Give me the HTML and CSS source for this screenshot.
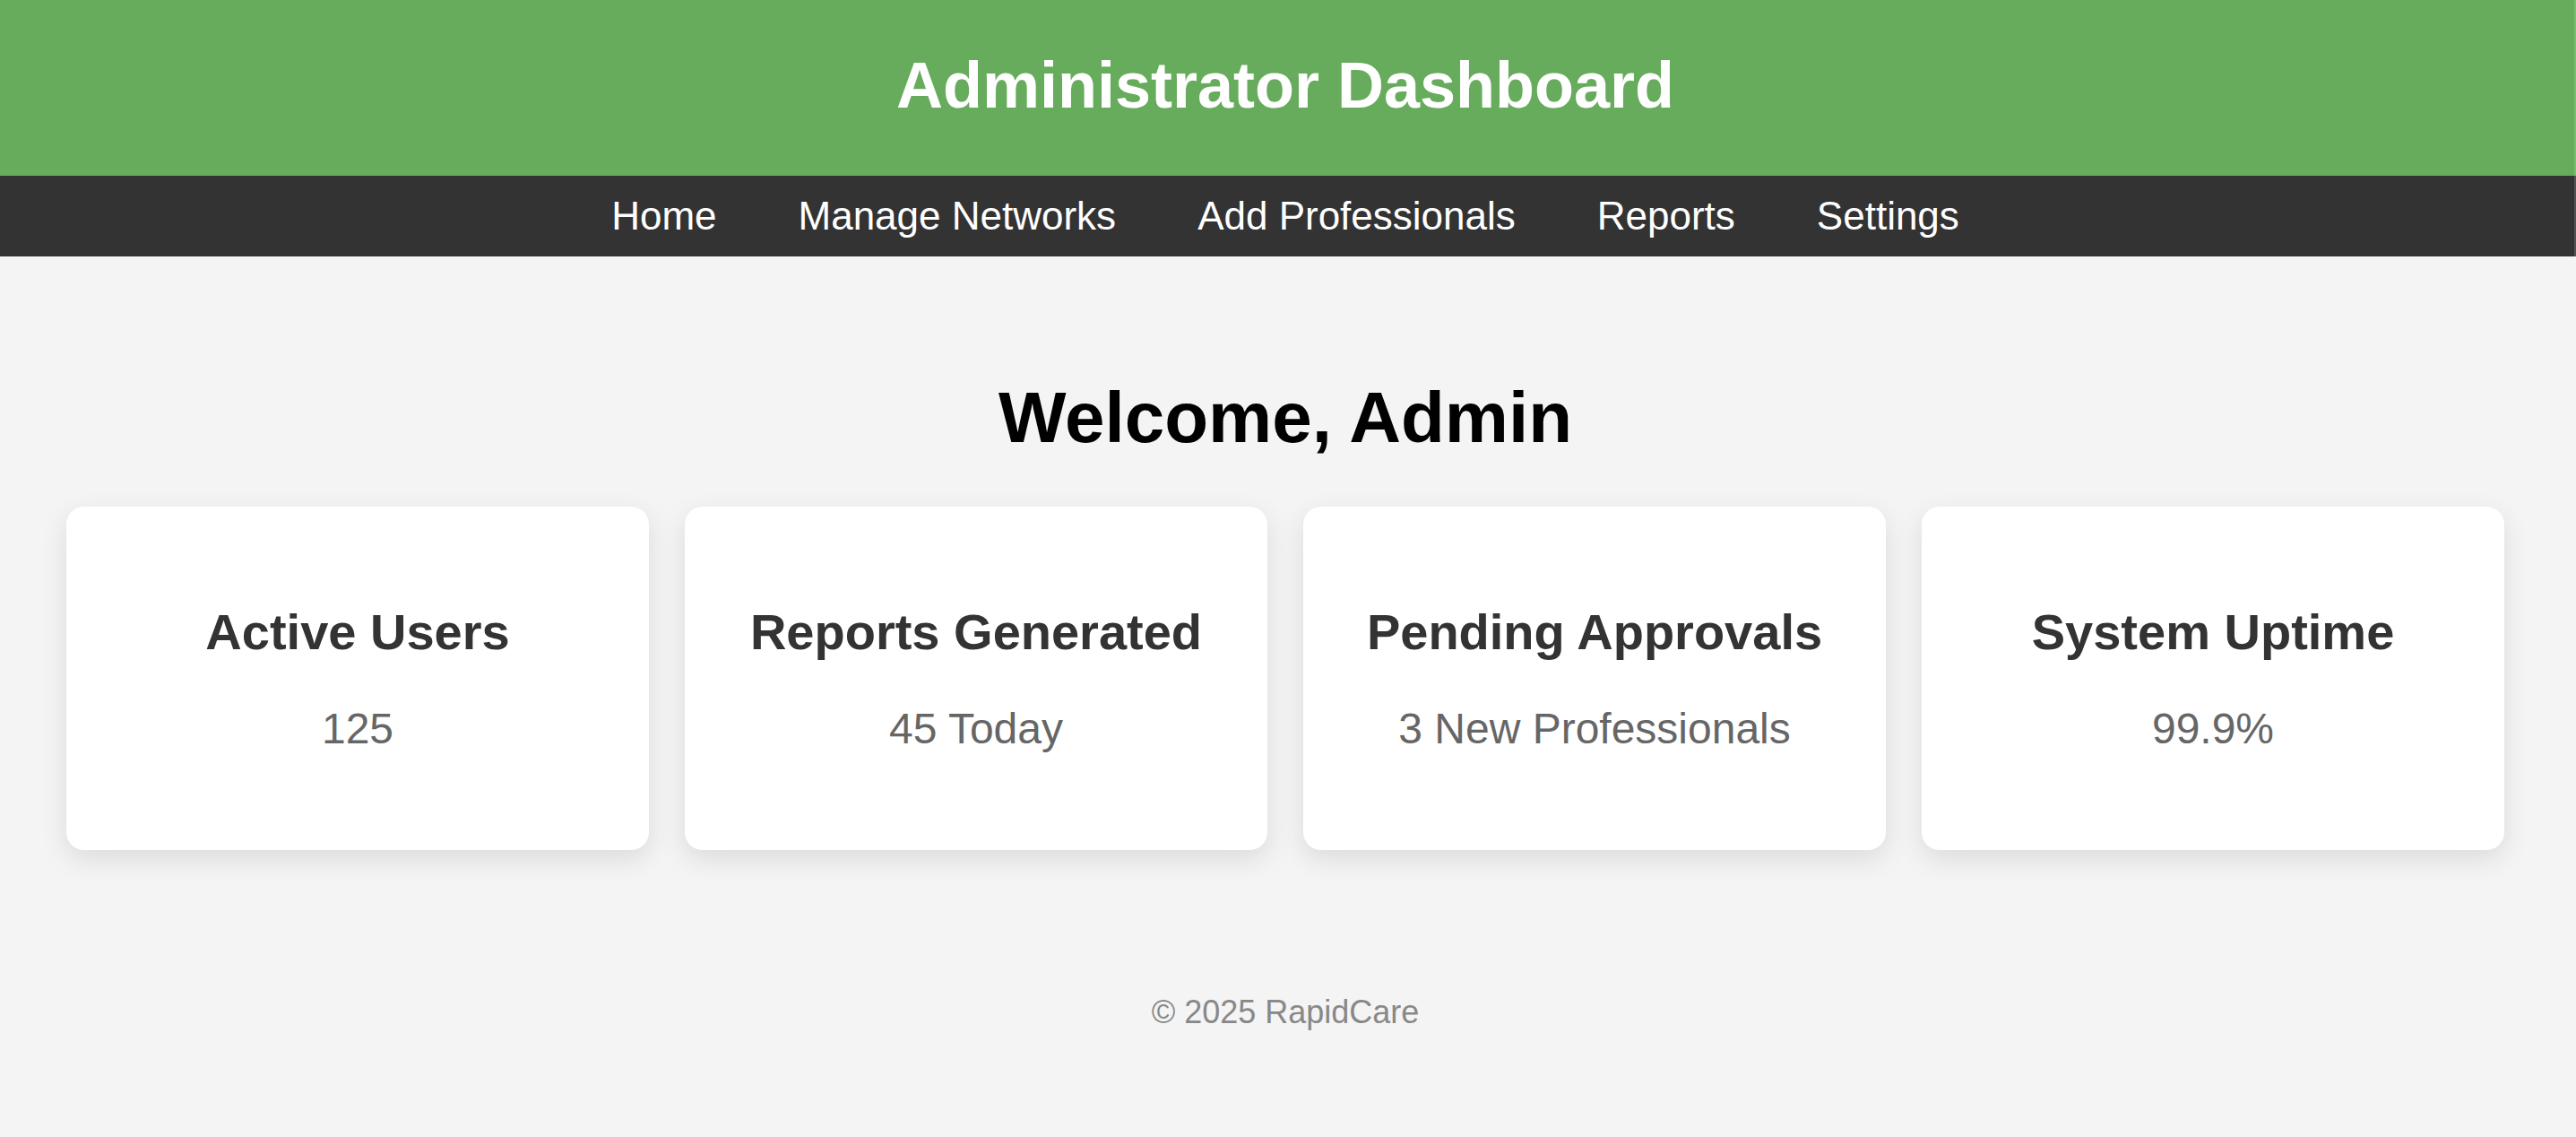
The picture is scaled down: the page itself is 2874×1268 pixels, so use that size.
FILE: index.html
```
<!DOCTYPE html>
<html lang="en">
<head>
<meta charset="utf-8">
<meta name="viewport" content="width=device-width, initial-scale=1">
<title>Administrator Dashboard</title>
<link rel="stylesheet" href="styles.css">
</head>
<body>
<header class="header"><h1 class="title">Administrator Dashboard</h1></header>
<nav class="nav">
<a href="#">Home</a>
<a href="#">Manage Networks</a>
<a href="#">Add Professionals</a>
<a href="#">Reports</a>
<a href="#">Settings</a>
</nav>
<main class="main">
<h2 class="welcome">Welcome, Admin</h2>
<section class="cards">
<article class="card"><h3>Active Users</h3><p>125</p></article>
<article class="card"><h3>Reports Generated</h3><p>45 Today</p></article>
<article class="card"><h3>Pending Approvals</h3><p>3 New Professionals</p></article>
<article class="card"><h3>System Uptime</h3><p>99.9%</p></article>
</section>
</main>
<footer class="footer">© 2025 RapidCare</footer>
</body>
</html>
```
FILE: styles.css
```
* { box-sizing: border-box; }
body {
  margin: 0;
  background: #f4f4f4;
  color: #000;
  font-family: Arial, "Liberation Sans", sans-serif;
  text-align: center;
}
h1, h2, h3, p { margin: 0; }
.header {
  padding: 51px 46px 57px 40px;
  background: #67ac5c;
  color: #fff;
}
.title { font-size: 72px; line-height: 88px; }
.nav {
  display: flex;
  justify-content: center;
  gap: 91px;
  padding: 20px 46px 20px 40px;
  background: #333;
}
/* Thin lighter edge down the right side of both bars */
.header, .nav { box-shadow: inset -2px 0 rgba(255, 255, 255, 0.15); }
.nav a {
  color: #fff;
  font-size: 44px;
  line-height: 50px;
  text-decoration: none;
}
.main { padding: 130px 80px 130px 74px; }
.welcome { font-size: 80px; line-height: 100px; }
.cards {
  display: grid;
  grid-template-columns: repeat(4, 1fr);
  gap: 40px;
  margin-top: 49px;
}
.card {
  padding: 108px 40px 107px;
  background: #fff;
  border-radius: 20px;
  box-shadow: 0 10px 30px rgba(0, 0, 0, 0.1);
}
.card h3 { color: #333; font-size: 56px; line-height: 64px; }
.card p { margin-top: 48px; color: #666; font-size: 48px; line-height: 56px; }
.footer { padding: 30px 46px 30px 40px; color: #888; font-size: 36px; line-height: 42px; }
```
